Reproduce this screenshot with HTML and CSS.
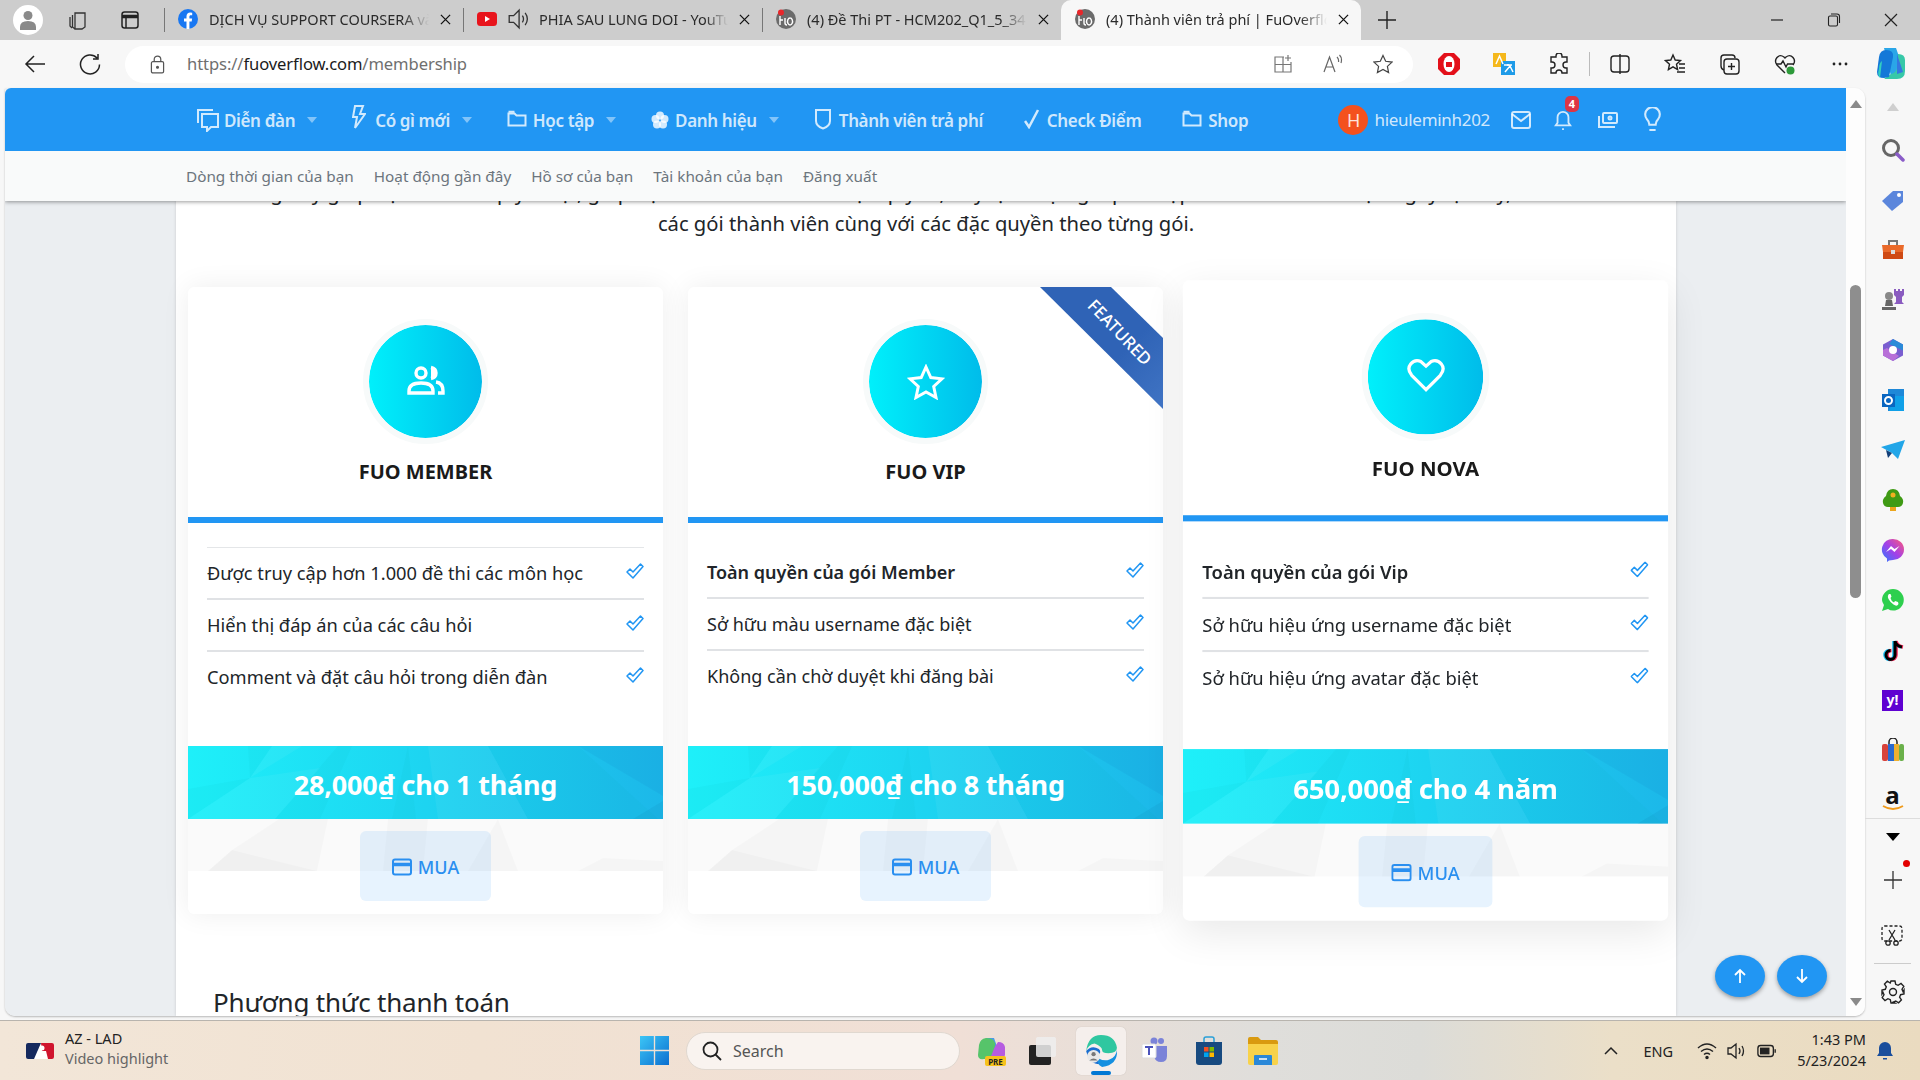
FILE: index.html
```html
<!DOCTYPE html>
<html lang="vi">
<head>
<meta charset="utf-8">
<title>Thành viên trả phí | FuOverflow</title>
<link rel="stylesheet" href="styles.css">
</head>
<body>
<svg class="defs" aria-hidden="true">
  <symbol id="x" viewBox="0 0 12 12"><path d="M1 1l10 10M11 1L1 11" fill="none" stroke="currentColor" stroke-width="1.4"/></symbol>
  <symbol id="tick" viewBox="0 0 18 16"><path d="M1 9l3-3 3 3 7.500-8L17 3.500 7 15z" fill="none" stroke="#2196f3" stroke-width="1.500" stroke-linejoin="round"/></symbol>
  <symbol id="card" viewBox="0 0 20 18"><rect x="1" y="1.500" width="18" height="15" rx="2" fill="none" stroke="#2a8ff0" stroke-width="2"/><path d="M1 6.500h18" stroke="#2a8ff0" stroke-width="3.500"/></symbol>
  <symbol id="fuo" viewBox="0 0 20 20"><circle cx="10" cy="10" r="10" fill="#6b6b6b"/><circle cx="5" cy="3.500" r="3" fill="#e8262a"/><path d="M4 7v9M4 11h3M9 9v5q0 2 2 2M14 9a2.500 3.500 0 1 0 .1 0" fill="none" stroke="#fff" stroke-width="1.400"/></symbol>
  <symbol id="caret" viewBox="0 0 10 6"><path d="M0 0h10L5 6z" fill="currentColor"/></symbol>
  <symbol id="folder" viewBox="0 0 20 18"><path d="M1.500 3.500h6l2 2h9v10h-17z" fill="none" stroke="currentColor" stroke-width="2"/><path d="M1.500 1.800h6" stroke="currentColor" stroke-width="2"/></symbol>
  <symbol id="poly" viewBox="0 0 475 125" preserveAspectRatio="none">
    <path d="M0 43L62 32 0 73zM62 32L60 0h24zM150 0h14l-32 73h-45zM220 0l8 73h-24zM300 0h90l80 73H340z" fill="#0aa" opacity=".06"/>
    <path d="M62 32L84 0h30zM62 32l70-10-45 51H0zM240 0h60l40 73h-90z" fill="#fff" opacity=".05"/>
    <path d="M390 0h85v50z" fill="#007" opacity=".04"/>
    <path d="M475 55l-30 18h30z" fill="#036" opacity=".06"/>
    <path d="M0 73h475v52H0z" fill="#000" opacity=".018"/>
    <path d="M91 73h49l-11 52H20l24-21zM310 73l20 52h-50zM200 73h40l-5 52h-40z" fill="#000" opacity=".02"/>
    <path d="M415 112l60 3v10h-85zM44 104l85 21H20z" fill="#000" opacity=".02"/>
  </symbol>
</svg>

<div class="screen">
  <header class="tabstrip">
    <div class="strip-left">
      <span class="avatar-circle"><svg class="i22" viewBox="0 0 22 22"><circle cx="11" cy="6.500" r="4.500" fill="#8a8a8a"/><path d="M3 21v-3q0-6 8-6t8 6v3z" fill="#8a8a8a"/></svg></span>
      <svg class="i20" viewBox="0 0 20 20" fill="none" stroke="#333" stroke-width="1.300"><path d="M7 3h10v14l-3 2H7zM4.500 5v12l2.500 2M2 7v9l2 2"/></svg>
      <svg class="i20" viewBox="0 0 20 20" fill="none" stroke="#222" stroke-width="1.500"><rect x="2" y="2" width="16" height="16" rx="2.500"/><path d="M2 6.500h16" stroke-width="3.500"/><path d="M6 6v12"/></svg>
    </div>
    <div class="tab">
      <svg class="fav" viewBox="0 0 20 20"><circle cx="10" cy="10" r="10" fill="#1877f2"/><path d="M8.500 20v-7.500H6V9.500h2.500V7.300C8.500 4.800 10 3.500 12.200 3.500l2 .2v2.500h-1.300c-1.200 0-1.500.7-1.500 1.500v1.800h2.700l-.4 3h-2.300V20z" fill="#fff"/></svg>
      <span class="tab-text">DỊCH VỤ SUPPORT COURSERA và các môn</span>
      <svg class="tab-x"><use href="#x"/></svg>
    </div>
    <div class="tab">
      <svg class="fav" viewBox="0 0 20 20"><rect y="3" width="20" height="14" rx="3.500" fill="#e8141c"/><path d="M8 7l5 3-5 3z" fill="#fff"/></svg>
      <svg class="speaker" viewBox="0 0 20 20" fill="none" stroke="#333" stroke-width="1.200"><path d="M2 7h4l5-5v16l-5-5H2zM14 7q2 3 0 6M16.500 4.500q4 5.500 0 11"/></svg>
      <span class="tab-text">PHIA SAU LUNG DOI - YouTube</span>
      <svg class="tab-x"><use href="#x"/></svg>
    </div>
    <div class="tab">
      <svg class="fav"><use href="#fuo"/></svg>
      <span class="tab-text">(4) Đề Thi PT - HCM202_Q1_5_34</span>
      <svg class="tab-x"><use href="#x"/></svg>
    </div>
    <div class="tab tab-active">
      <svg class="fav"><use href="#fuo"/></svg>
      <span class="tab-text">(4) Thành viên trả phí | FuOverflow</span>
      <svg class="tab-x"><use href="#x"/></svg>
    </div>
    <svg class="tab-plus" viewBox="0 0 18 18"><path d="M9 0v18M0 9h18" stroke="#222" stroke-width="1.400"/></svg>
    <div class="win-controls">
      <svg class="i14" viewBox="0 0 14 14"><path d="M1 7h12" stroke="#222" stroke-width="1.200"/></svg>
      <svg class="i14" viewBox="0 0 14 14" fill="none" stroke="#222" stroke-width="1.100"><rect x="1.500" y="3" width="9" height="10" rx="1.500"/><path d="M4 1h6q2.500 0 2.500 2.500V10"/></svg>
      <svg class="i14" viewBox="0 0 14 14"><path d="M1 1l12 12M13 1L1 13" stroke="#222" stroke-width="1.200"/></svg>
    </div>
  </header>

  <div class="toolbar">
    <svg class="tool tool-back" viewBox="0 0 22 22" fill="none" stroke="#222" stroke-width="1.500"><path d="M21 11H2M10 3l-8 8 8 8"/></svg>
    <svg class="tool tool-reload" viewBox="0 0 22 22" fill="none" stroke="#222" stroke-width="1.500"><path d="M18 5a9.500 9.500 0 1 0 2.500 6.500M19 1v5h-5"/></svg>
    <div class="address">
      <svg class="lock" viewBox="0 0 16 20" fill="none" stroke="#555" stroke-width="1.300"><rect x="1.500" y="7" width="13" height="12" rx="1.500"/><path d="M4.500 7V4.500a3.500 3.500 0 0 1 7 0V7"/><circle cx="8" cy="13" r="1" fill="#555"/></svg>
      <span class="url"><span class="url-dim">https://</span>fuoverflow.com<span class="url-dim">/membership</span></span>
      <div class="addr-icons">
        <svg class="i20" viewBox="0 0 20 20" fill="none" stroke="#777" stroke-width="1.200"><path d="M11 3H2v15h16V8M2 10.500h16M10 3v15M15 1v6M12 4h6"/></svg>
        <svg class="i20" viewBox="0 0 20 20" fill="none" stroke="#666" stroke-width="1.200"><path d="M1 18L6.500 3 12 18M3 13h7M14 3q2 2 1.500 5M16.500 1q3 3 1.500 8"/></svg>
        <svg class="i20" viewBox="0 0 20 20" fill="none" stroke="#444" stroke-width="1.200"><path d="M10 1.500l2.700 5.800 6.300.8-4.600 4.300 1.200 6.200L10 15.500l-5.600 3.100 1.200-6.200L1 8.100l6.300-.8z"/></svg>
      </div>
    </div>
    <div class="tool-icons">
      <svg class="i24" viewBox="0 0 24 24"><path d="M7 1h10l6 6v10l-6 6H7l-6-6V7z" fill="#e3101a"/><ellipse cx="12" cy="12" rx="5.500" ry="8" fill="#fff"/><path d="M9 10h6v5H9z" fill="#e3101a"/></svg>
      <svg class="i24" viewBox="0 0 24 24"><rect x="1" y="1" width="13" height="14" fill="#f5b81c"/><rect x="9" y="9" width="14" height="14" fill="#1e9be8"/><path d="M12 13h8M16 12v2M13 20l5-6 3 6" fill="none" stroke="#fff" stroke-width="1.500"/><path d="M4 12L7.500 4 11 12" fill="none" stroke="#fff" stroke-width="1.500"/></svg>
      <svg class="i22" viewBox="0 0 22 22" fill="none" stroke="#222" stroke-width="1.400"><path d="M8 3a3 3 0 0 1 6 0v1h5v5h-1a3 3 0 0 0 0 6h1v5h-5a3 3 0 0 0-6 0H3v-5h1a3 3 0 0 0 0-6H3V4h5z"/></svg>
      <span class="tool-sep"></span>
      <svg class="i22" viewBox="0 0 22 22" fill="none" stroke="#222" stroke-width="1.400"><rect x="2" y="3" width="18" height="16" rx="3"/><path d="M11 1v20"/></svg>
      <svg class="i22" viewBox="0 0 22 22" fill="none" stroke="#222" stroke-width="1.400"><path d="M9 2l2.200 5 5.300.6-4 3.600 1.100 5.300L9 13.800l-4.600 2.700 1.100-5.300-4-3.600L6.800 7zM15 11h6M15 15h6M13 19h8"/></svg>
      <svg class="i22" viewBox="0 0 22 22" fill="none" stroke="#222" stroke-width="1.400"><rect x="5" y="6" width="15" height="15" rx="3"/><path d="M5 17q-3-1-3-4V5q0-3 3-3h8q3 0 3 3M12.500 10v7M9 13.500h7"/></svg>
      <svg class="i22" viewBox="0 0 22 22" fill="none" stroke="#222" stroke-width="1.400"><path d="M11 20L3 12q-3-4 0-7.500T10 4l1 1 1-1q4-3 7 .5t0 7.500"/><path d="M2 11h5l2-3 3 6 1.500-3H20"/><circle cx="16.500" cy="17.500" r="4" fill="#2d9a3a" stroke="none"/></svg>
      <svg class="i22" viewBox="0 0 22 22"><circle cx="5" cy="11" r="1.400" fill="#222"/><circle cx="11" cy="11" r="1.400" fill="#222"/><circle cx="17" cy="11" r="1.400" fill="#222"/></svg>
      <svg class="copilot" viewBox="0 0 30 34"><path d="M8 1h12l7 20q1 6-5 6L15 29z" fill="#2aa6e8"/><path d="M22 7q7 0 7 6v11q0 8-8 8H8l7-5q5-1 6-6z" fill="#37c8a8"/><path d="M21 7l6 18-6 2z" fill="#3478e0"/><path d="M10 3Q4 3 3 10L1 25q0 6 7 6l5-1 4-20q1-7-7-7z" fill="#1478d8"/><path d="M3 22q0-6 3-8l-2 17q-3-3-1-9z" fill="#33d0c0"/></svg>
    </div>
  </div>

  <div class="main">
    <div class="viewport">
      <div class="page">
        <nav class="nav">
          <a class="nav-item"><svg class="ni ni-24" viewBox="0 0 24 24" fill="none" stroke="currentColor" stroke-width="2"><path d="M2 15V2h15"/><path d="M6 6h16v13h-7l-4 4v-4H6z"/></svg>Diễn đàn<svg class="caret"><use href="#caret"/></svg></a>
          <a class="nav-item"><svg class="ni ni-14" viewBox="0 0 14 24" fill="none" stroke="currentColor" stroke-width="2"><path d="M3 1h8L8 9h5L3 23l2-11H1z"/></svg>Có gì mới<svg class="caret"><use href="#caret"/></svg></a>
          <a class="nav-item"><svg class="ni ni-20"><use href="#folder"/></svg>Học tập<svg class="caret"><use href="#caret"/></svg></a>
          <a class="nav-item"><svg class="ni ni-18" viewBox="0 0 18 18" fill="currentColor"><circle cx="9" cy="4.500" r="4"/><circle cx="4.500" cy="8" r="4"/><circle cx="13.500" cy="8" r="4"/><circle cx="6" cy="13.500" r="4"/><circle cx="12" cy="13.500" r="4"/></svg>Danh hiệu<svg class="caret"><use href="#caret"/></svg></a>
          <a class="nav-item nav-plain"><svg class="ni ni-18t" viewBox="0 0 18 22" fill="none" stroke="currentColor" stroke-width="2"><path d="M2 2h14v11q0 5-7 7.500Q2 18 2 13z"/></svg>Thành viên trả phí</a>
          <a class="nav-item nav-plain"><svg class="ni ni-16" viewBox="0 0 16 20" fill="none" stroke="currentColor" stroke-width="2.500"><path d="M1 12l4 6L14 1"/></svg>Check Điểm</a>
          <a class="nav-item"><svg class="ni ni-20"><use href="#folder"/></svg>Shop</a>
          <div class="nav-right">
            <a class="user"><span class="user-av">H</span>hieuleminh202</a>
            <svg class="nr nr-first" viewBox="0 0 20 18" fill="none" stroke="currentColor" stroke-width="2"><rect x="1" y="1" width="18" height="16" rx="2"/><path d="M1 3l9 7 9-7"/></svg>
            <span class="bell"><svg class="nr" viewBox="0 0 20 22" fill="none" stroke="currentColor" stroke-width="2"><path d="M2 17h16l-2-3V8a6 6 0 0 0-12 0v6zM9 21h2"/></svg><span class="badge">4</span></span>
            <svg class="nr" viewBox="0 0 20 18" fill="none" stroke="currentColor" stroke-width="2"><path d="M1 5v11h16"/><rect x="5" y="2" width="14" height="10" rx="1"/><circle cx="12" cy="7" r="1.500"/></svg>
            <svg class="nr nr-bulb" viewBox="0 0 18 24" fill="none" stroke="currentColor" stroke-width="2"><path d="M6 17q0-3-2.500-5.500a7 7 0 1 1 11 0Q12 14 12 17zM6 22h6"/></svg>
          </div>
        </nav>
        <div class="subnav">
          <a>Dòng thời gian của bạn</a><a>Hoạt động gần đây</a><a>Hồ sơ của bạn</a><a>Tài khoản của bạn</a><a>Đăng xuất</a>
        </div>
        <main class="body">
          <section class="panel">
            <p class="intro">Trang này giúp bạn nắm rõ quyền lợi, giúp bạn hiểu thêm về các đặc quyền, hãy lựa chọn gói phù hợp với nhu cầu của bạn ngay tại đây, bên dưới là<br>các gói thành viên cùng với các đặc quyền theo từng gói.</p>
            <div class="plans">
              <article class="plan">
                <div class="plan-head">
                  <span class="plan-icon"><svg class="pi" viewBox="0 2 38 30" fill="none" stroke="#fff" stroke-width="3.400"><circle cx="14" cy="8" r="5"/><path d="M24 2.500q5 1 5 5.500t-5 5.500" fill="#fff"/><path d="M2 28v-2q0-8 12-8t12 8v2zM29 17q7 1 7 9v2h-5"/></svg></span>
                  <h3>FUO MEMBER</h3>
                </div>
                <ul class="feats feats-top">
                  <li>Được truy cập hơn 1.000 đề thi các môn học<svg class="tick"><use href="#tick"/></svg></li>
                  <li>Hiển thị đáp án của các câu hỏi<svg class="tick"><use href="#tick"/></svg></li>
                  <li>Comment và đặt câu hỏi trong diễn đàn<svg class="tick"><use href="#tick"/></svg></li>
                </ul>
                <div class="plan-foot">
                  <svg class="poly"><use href="#poly"/></svg>
                  <div class="price">28,000₫ cho 1 tháng</div>
                  <a class="buy"><svg class="buy-i"><use href="#card"/></svg>MUA</a>
                </div>
              </article>
              <article class="plan">
                <div class="ribbon"><span>FEATURED</span></div>
                <div class="plan-head">
                  <span class="plan-icon"><svg class="pi" viewBox="0 0 38 36" fill="none" stroke="#fff" stroke-width="3"><path d="M19 3l4.800 10.500 11.200 1.300-8.300 7.700 2.300 11L19 28l-10 5.500 2.300-11L3 14.800l11.200-1.300z"/></svg></span>
                  <h3>FUO VIP</h3>
                </div>
                <ul class="feats">
                  <li><b>Toàn quyền của gói Member</b><svg class="tick"><use href="#tick"/></svg></li>
                  <li>Sở hữu màu username đặc biệt<svg class="tick"><use href="#tick"/></svg></li>
                  <li>Không cần chờ duyệt khi đăng bài<svg class="tick"><use href="#tick"/></svg></li>
                </ul>
                <div class="plan-foot">
                  <svg class="poly"><use href="#poly"/></svg>
                  <div class="price">150,000₫ cho 8 tháng</div>
                  <a class="buy"><svg class="buy-i"><use href="#card"/></svg>MUA</a>
                </div>
              </article>
              <article class="plan plan-hot">
                <div class="plan-head">
                  <span class="plan-icon"><svg class="pi" viewBox="0 2 38 34" fill="none" stroke="#fff" stroke-width="3.200"><path d="M19 31L5 17Q0 11 4 6t10-2.500L19 8l5-4.500Q30 1 34 6t-1 11z"/></svg></span>
                  <h3>FUO NOVA</h3>
                </div>
                <ul class="feats">
                  <li><b>Toàn quyền của gói Vip</b><svg class="tick"><use href="#tick"/></svg></li>
                  <li>Sở hữu hiệu ứng username đặc biệt<svg class="tick"><use href="#tick"/></svg></li>
                  <li>Sở hữu hiệu ứng avatar đặc biệt<svg class="tick"><use href="#tick"/></svg></li>
                </ul>
                <div class="plan-foot">
                  <svg class="poly"><use href="#poly"/></svg>
                  <div class="price">650,000₫ cho 4 năm</div>
                  <a class="buy"><svg class="buy-i"><use href="#card"/></svg>MUA</a>
                </div>
              </article>
            </div>
            <h2 class="pay-title">Phương thức thanh toán</h2>
          </section>
        </main>
        <div class="fabs">
          <a class="fab"><svg class="i16" viewBox="0 0 16 16" fill="none" stroke="#fff" stroke-width="1.800"><path d="M8 15V2M3 7l5-5 5 5"/></svg></a>
          <a class="fab"><svg class="i16" viewBox="0 0 16 16" fill="none" stroke="#fff" stroke-width="1.800"><path d="M8 1v13M3 9l5 5 5-5"/></svg></a>
        </div>
      </div>
      <div class="scrollbar">
        <span class="sb-up"></span>
        <span class="sb-thumb"></span>
        <span class="sb-down"></span>
      </div>
    </div>
    <aside class="sidebar">
      <div class="sd sd-arrow"><span class="sb-up sb-up-pale"></span></div>
      <div class="sd"><svg class="i24" viewBox="0 0 24 24" fill="none"><circle cx="10" cy="10" r="7.500" stroke="#666" stroke-width="3"/><path d="M16 16l6 6" stroke="#8a5cc8" stroke-width="3.500" stroke-linecap="round"/></svg></div>
      <div class="sd"><svg class="i24" viewBox="0 0 24 24"><path d="M12 3h10v11L11 23 1 13z" fill="#5b86dc"/><circle cx="18" cy="7" r="2" fill="#fff"/></svg></div>
      <div class="sd"><svg class="i24" viewBox="0 0 24 24"><path d="M8 7V3h8v4" fill="none" stroke="#777" stroke-width="2"/><path d="M1 7h22l-1 7H2z" fill="#ea6a2a"/><path d="M2 14h20v7H2z" fill="#cf4a14"/><rect x="10" y="12" width="4" height="4" fill="#ddd"/></svg></div>
      <div class="sd"><svg class="i24" viewBox="0 0 24 24"><circle cx="8" cy="8" r="4" fill="#888"/><path d="M5 12h6l1 6H4zM1 19h14v3H1z" fill="#666"/><path d="M13 1h2v2h2V1h2v2h2V1h2v6l-2 2v5l2 2H13l2-2V9l-2-2z" fill="#8a5cc0"/></svg></div>
      <div class="sd"><svg class="i24" viewBox="0 0 24 24"><path d="M12 1l10 5.500v11L12 23 2 17.500v-11z" fill="#7a5ed0"/><path d="M12 1l10 5.500v6L8 6z" fill="#2a8ad8"/><path d="M2 12l4-2 12 8-6 5-10-5.500z" fill="#b870d8"/><circle cx="12" cy="12" r="4" fill="#fff"/></svg></div>
      <div class="sd"><svg class="i24" viewBox="0 0 24 24"><path d="M7 1h16v22H7z" fill="#1e88d8"/><path d="M14 8h9v15H8z" fill="#10a0e8"/><rect x="1" y="6" width="13" height="13" fill="#0a66c0"/><circle cx="7.500" cy="12.500" r="3.500" fill="none" stroke="#fff" stroke-width="2"/></svg></div>
      <div class="sd"><svg class="i24" viewBox="0 0 24 24"><path d="M0 9L24 2 17 21l-6-6z" fill="#22a6e8"/><path d="M5 12l6 3-4 5z" fill="#123f78"/></svg></div>
      <div class="sd"><svg class="i24" viewBox="0 0 24 24"><rect x="9" y="18" width="6" height="5" fill="#eca51c"/><path d="M12 1q6 0 7 7 4 3 3 7t-5 4H7q-4 0-5-4t3-7q1-7 7-7z" fill="#3f9a14"/><circle cx="12" cy="7" r="2.500" fill="#f0b020"/></svg></div>
      <div class="sd"><svg class="i24" viewBox="0 0 24 24"><defs><linearGradient id="ms" x1="0" y1="1" x2="1" y2="0"><stop offset="0" stop-color="#2a7cff"/><stop offset=".5" stop-color="#a440e8"/><stop offset="1" stop-color="#ff5a78"/></linearGradient></defs><path d="M12 1a11 10.500 0 0 1 0 21l-4 .5-2 1.500v-3.500A10.500 10.500 0 0 1 12 1z" fill="url(#ms)"/><path d="M5 14l5-6 3.500 3 5-3-5 6L10 11z" fill="#fff"/></svg></div>
      <div class="sd"><svg class="i24" viewBox="0 0 24 24"><path d="M12 1a10.800 10.800 0 0 1 0 21.600q-3 0-5-1.500L1 23l2-6Q1 14 1 12A11 11 0 0 1 12 1z" fill="#2ecf4e"/><path d="M8 6q-2 2-.5 5t5 5.500 5-.5l-.5-2-3-1-1 1.500Q10 13 9.500 10l1-1.500L9.500 6z" fill="#fff"/></svg></div>
      <div class="sd"><svg class="i24" viewBox="0 0 24 24" fill="none"><path d="M14 2v14a4.500 4.500 0 1 1-4.500-4.500M14 2q1 5 7 6" stroke="#1be" stroke-width="3.500" transform="translate(-1 1)"/><path d="M14 2v14a4.500 4.500 0 1 1-4.500-4.500M14 2q1 5 7 6" stroke="#f2295b" stroke-width="3.500" transform="translate(1 1)"/><path d="M14 2v14a4.500 4.500 0 1 1-4.500-4.500M14 2q1 5 7 6" stroke="#000" stroke-width="3" transform="translate(0 1)"/></svg></div>
      <div class="sd"><span class="yahoo">y!</span></div>
      <div class="sd"><svg class="i24" viewBox="0 0 24 24"><path d="M8 7V4a4 4 0 0 1 8 0v3" fill="none" stroke="#222" stroke-width="1.500"/><rect x="1" y="6" width="6" height="17" rx="2" fill="#d8423a"/><rect x="7" y="6" width="6" height="17" fill="#2a6ad0"/><rect x="13" y="6" width="5" height="17" fill="#eeb030"/><rect x="18" y="6" width="5" height="17" rx="2" fill="#6ab04a"/></svg></div>
      <div class="sd sd-last"><span class="amz">a</span><svg class="amz-smile" viewBox="0 0 22 6"><path d="M1 1q10 6 20 0" fill="none" stroke="#f09a1a" stroke-width="1.800"/></svg></div>
      <div class="sd sd-caret"><svg class="sc" viewBox="0 0 14 10"><path d="M0 1h14L7 9z" fill="#000"/></svg></div>
      <div class="sd sd-plus"><svg class="i18" viewBox="0 0 18 18"><path d="M9 0v18M0 9h18" stroke="#333" stroke-width="1.300"/></svg><span class="red-dot"></span></div>
      <div class="sd sd-snip"><svg class="i24" viewBox="0 0 24 24" fill="none" stroke="#222" stroke-width="1.300"><rect x="1" y="2" width="20" height="15" rx="2.500" stroke-dasharray="3 2"/><path d="M8 6l6 10M14 6L8 16"/><circle cx="7" cy="19" r="2.200"/><circle cx="15" cy="19" r="2.200"/></svg></div>
      <div class="sd"><svg class="i24" viewBox="0 0 24 24" fill="none" stroke="#222" stroke-width="1.400"><circle cx="12" cy="12" r="3.500"/><path d="M10 1h4l.7 3.300 2.400 1 2.900-1.800 2.800 2.800-1.800 2.900 1 2.400L23 10v4l-3.400.7-1 2.400 1.800 2.900-2.800 2.800-2.900-1.800-2.400 1L14 23h-4l-.7-3.300-2.400-1-2.900 1.800-2.800-2.800 1.800-2.900-1-2.400L1 14V10l3.300-.7 1-2.400L3.500 4l2.800-2.800 2.900 1.800z"/></svg></div>
    </aside>
  </div>

  <footer class="taskbar">
    <div class="tb-news">
      <svg class="mlb" viewBox="0 0 28 16"><rect width="28" height="16" rx="2" fill="#fff"/><path d="M2 0h13L8 16H2q-2 0-2-2V2q0-2 2-2z" fill="#15295e"/><path d="M15 0h11q2 0 2 2v12q0 2-2 2H20l-4-8z" fill="#d0152e"/><circle cx="16" cy="5" r="2.500" fill="#fff"/><path d="M12 8h8l2 8H10z" fill="#fff"/></svg>
      <div class="news-text"><span>AZ - LAD</span><span class="news-sub">Video highlight</span></div>
    </div>
    <svg class="win" viewBox="0 0 30 30"><defs><linearGradient id="wg" x1="0" y1="0" x2="1" y2="1"><stop offset="0" stop-color="#3cc6f6"/><stop offset="1" stop-color="#0b6fd0"/></linearGradient></defs><path d="M0 0h14.300v14.300H0zM15.700 0H30v14.300H15.700zM0 15.700h14.300V30H0zM15.700 15.700H30V30H15.700z" fill="url(#wg)"/></svg>
    <div class="tb-search"><svg class="i20" viewBox="0 0 20 20" fill="none" stroke="#222" stroke-width="1.800"><circle cx="8.500" cy="8.500" r="7"/><path d="M13.500 13.500L19 19"/></svg><span>Search</span></div>
    <div class="tb-apps">
      <span class="app app-first"><svg class="i30" viewBox="0 0 30 30"><path d="M9 2h8l5 14q3 5-2 6H8z" fill="#4a9be8"/><path d="M21 6q6 0 7 5v8q-1 5-8 4H10z" fill="#b65ce0"/><path d="M9 2Q3 3 2 9L1 19q0 5 6 4h6l5-13q1-8-9-8z" fill="#56c46a"/><rect x="8" y="20" width="21" height="10" rx="2" fill="#f7c21c"/><text class="pre" x="18.500" y="28.500" text-anchor="middle">PRE</text></svg></span>
      <span class="app"><svg class="i30" viewBox="0 0 30 30"><rect x="2" y="9" width="22" height="20" rx="2" fill="#222"/><rect x="9" y="1" width="20" height="20" rx="2" fill="#eee" opacity=".85"/></svg></span>
      <span class="app app-on"><svg class="i32" viewBox="0 0 32 32"><path d="M16 1q13 0 15 12 0 5-8 5-6 0-6-3T10 9Q4 10 2 16 4 1 16 1z" fill="#2fc7a0"/><path d="M2 16q5-6 12-2 3 3-1 6-2 6 6 8-13 3-17-12z" fill="#1a6ed0"/><path d="M31 15q1 14-14 16-6-3-3-8 5 3 10 1 6-2 7-9z" fill="#1590e0"/><circle cx="9" cy="21" r="6" fill="#e8e8e8"/><circle cx="9" cy="19" r="2" fill="#777"/><path d="M5 25q4-4 8 0z" fill="#777"/></svg><span class="app-bar"></span></span>
      <span class="app"><svg class="i30" viewBox="0 0 30 30"><circle cx="21" cy="5" r="3" fill="#7b83d8"/><circle cx="14" cy="5" r="3.500" fill="#7b83d8"/><path d="M14 10h13v10q0 6-6 6t-7-6z" fill="#7b83d8"/><rect x="2" y="8" width="14" height="14" rx="1.500" fill="#fff" stroke="#ddd"/><path d="M5 11h8M9 11v8" stroke="#4b53bc" stroke-width="2"/></svg></span>
      <span class="app"><svg class="i30" viewBox="0 0 30 30"><path d="M10 6V3a2 2 0 0 1 2-2h6a2 2 0 0 1 2 2v3" fill="none" stroke="#2aa0d8" stroke-width="1.500"/><path d="M2 6h26v20q0 3-3 3H5q-3 0-3-3z" fill="#174a80"/><path d="M10 11h4.500v4.500H10z" fill="#f25022"/><path d="M15.500 11H20v4.500h-4.500z" fill="#7fba00"/><path d="M10 16.500h4.500V21H10z" fill="#00a4ef"/><path d="M15.500 16.500H20V21h-4.500z" fill="#ffb900"/></svg></span>
      <span class="app"><svg class="i30" viewBox="0 0 30 30"><path d="M0 3q0-2 2-2h8l3 3h15q2 0 2 2v4H0z" fill="#d99a10"/><path d="M0 8h30v19q0 2-2 2H2q-2 0-2-2z" fill="#f8d24a"/><path d="M7 19h16q1 0 1 1v9H6v-9q0-1 1-1z" fill="#2a88d8"/><path d="M11 23h8" stroke="#fff" stroke-width="1.500"/></svg></span>
    </div>
    <div class="tray">
      <svg class="i14" viewBox="0 0 14 14" fill="none" stroke="#222" stroke-width="1.500"><path d="M1 10l6-6 6 6"/></svg>
      <span class="eng">ENG</span>
      <svg class="i20" viewBox="0 0 20 20" fill="none" stroke="#222" stroke-width="1.500"><path d="M1 7q9-8 18 0M4 10.500q6-5 12 0M7 13.500q3-2.500 6 0"/><circle cx="10" cy="16.500" r="1" fill="#222"/></svg>
      <svg class="i20" viewBox="0 0 20 20" fill="none" stroke="#222" stroke-width="1.300"><path d="M1 7h3l5-4v14l-5-4H1zM12 7q2 3 0 6M15 5q3 5 0 10"/></svg>
      <svg class="i20" viewBox="0 0 22 20" fill="none" stroke="#222" stroke-width="1.500"><rect x="1" y="4" width="17" height="12" rx="3"/><rect x="4" y="7" width="9" height="6" fill="#222"/><path d="M20 8v4"/></svg>
      <div class="clock"><span>1:43 PM</span><span>5/23/2024</span></div>
      <svg class="i20 tb-bell" viewBox="0 0 20 20"><path d="M2 15l2-3V7a6 6 0 0 1 12 0v5l2 3zM8 17h4v1.500H8z" fill="#1a4e9c"/></svg>
    </div>
  </footer>
</div>
</body>
</html>
```

FILE: styles.css
```css
* { box-sizing: border-box; }
html, body { margin: 0; height: 100%; overflow: hidden; }
body { font-family: "Noto Sans", "Open Sans", "Liberation Sans", sans-serif; color: #212529; }
a { color: inherit; text-decoration: none; }
h2, h3, p, ul { margin: 0; padding: 0; }
svg { display: block; flex: none; }
.defs { position: absolute; width: 0; height: 0; }
.i14 { width: 14px; height: 14px; }
.i16 { width: 16px; height: 16px; }
.i18 { width: 18px; height: 18px; }
.i20 { width: 20px; height: 20px; }
.i22 { width: 22px; height: 22px; }
.i24 { width: 24px; height: 24px; }
.i30 { width: 30px; height: 30px; }
.i32 { width: 34px; height: 34px; }

.screen { width: 1920px; height: 1080px; display: flex; flex-direction: column; background: #f7f7f7; }

/* tab strip */
.tabstrip { height: 40px; background: #cdcdcd; display: flex; align-items: center; flex: none; }
.strip-left { width: 164px; height: 100%; display: flex; align-items: center; padding-left: 13px; gap: 25px; }
.strip-left .i20:last-child { margin-left: 7px; }
.avatar-circle { width: 30px; height: 30px; border-radius: 50%; background: #fff; display: flex; align-items: center; justify-content: center; }
.tab { width: 299px; height: 40px; display: flex; align-items: center; padding: 0 12px 2px 14px; font-size: 14.500px; color: #2a2a2a; position: relative; gap: 11px; }
.tab::before { content: ""; position: absolute; left: 0; top: 8px; bottom: 8px; width: 1px; background: #777; }
.tab-active { background: #f7f7f7; border-radius: 10px 10px 0 0; width: 300px; }
.tab-active::before { display: none; }
.fav { width: 20px; height: 20px; }
.speaker { width: 22px; height: 22px; margin: 0 -1px; }
.tab-text { flex: 1; white-space: nowrap; overflow: hidden; -webkit-mask-image: linear-gradient(90deg, #000 88%, transparent); mask-image: linear-gradient(90deg, #000 88%, transparent); }
.tab-x { width: 11px; height: 11px; color: #111; }
.tab-plus { width: 18px; height: 18px; margin-left: 17px; }
.win-controls { margin-left: auto; display: flex; gap: 43px; padding-right: 22px; }

/* toolbar */
.toolbar { height: 48px; flex: none; display: flex; align-items: center; padding-left: 24px; background: #f7f7f7; }
.tool { width: 22px; height: 22px; }
.tool-reload { margin-left: 33px; }
.address { margin-left: 24px; flex: none; width: 1288px; height: 37px; border-radius: 19px; background: #fff; display: flex; align-items: center; padding: 0 20px 0 25px; }
.lock { width: 15px; height: 19px; }
.url { margin-left: 22px; font-size: 16.600px; color: #1b1b1b; letter-spacing: -.1px; padding-bottom: 2px; }
.url-dim { color: #6f6f6f; }
.addr-icons { margin-left: auto; display: flex; gap: 30px; }
.tool-icons { margin-left: 24px; display: flex; align-items: center; flex: 1; min-width: 0; gap: 31px; }
.tool-icons .i22 { margin: 0 1px; }
.tool-sep { width: 1px; height: 24px; background: #bbb; margin: 0 -13px; }
.copilot { width: 30px; height: 34px; margin-left: -7px; }

/* main */
.main { flex: 1; display: flex; min-height: 0; padding-bottom: 4px; padding-left: 5px; }
.viewport { width: 1860px; flex: none; display: flex; border-radius: 0 10px 10px 10px; overflow: hidden; box-shadow: 0 1px 2px rgba(0,0,0,.25); }
.page { flex: 1; position: relative; display: flex; flex-direction: column; min-width: 0; overflow: hidden; background: #ebeef1; }

.nav { height: 63px; flex: none; background: #2196f3; display: flex; align-items: center; padding: 1px 184px 0 191px; gap: 35px; color: rgba(255,255,255,.8); font-weight: 600; font-size: 17px; letter-spacing: -.36px; border-radius: 6px 0 0 0; position: relative; z-index: 3; }
.nav-item { display: flex; align-items: center; gap: 6px; white-space: nowrap; }
.nav-plain { margin-right: 6px; }
.ni-24 { width: 24px; height: 24px; margin-right: -2px; }
.ni-14 { width: 14px; height: 24px; margin-right: 3px; margin-top: -6px; }
.ni-20 { width: 20px; height: 18px; margin-top: -3px; }
.ni-18 { width: 18px; height: 18px; }
.ni-18t { width: 18px; height: 22px; margin-right: 1px; margin-top: -3px; }
.ni-16 { width: 16px; height: 20px; margin-top: -2px; margin-right: 1px; }
.caret { width: 10px; height: 6px; margin-left: 6px; opacity: .55; }
.nav-right { margin-left: auto; display: flex; align-items: center; font-weight: 400; gap: 25px; letter-spacing: -.3px; margin-top: -1px; }
.user { display: flex; align-items: center; gap: 6px; margin-right: -4px; }
.user-av { width: 30px; height: 30px; border-radius: 50%; background: #f4511e; color: rgba(255,255,255,.85); display: flex; align-items: center; justify-content: center; font-size: 18px; }
.nr { width: 20px; height: 20px; }
.nr-bulb { width: 19px; height: 25px; }
.bell { position: relative; margin-left: -3px; }
.badge { position: absolute; left: 12px; top: -14px; width: 14px; height: 16px; border-radius: 5px; background: #dc3545; color: #fff; font-size: 11px; font-weight: 700; line-height: 16px; text-align: center; letter-spacing: 0; }

.subnav { height: 50px; flex: none; display: flex; align-items: center; gap: 20px; padding-left: 181px; background: #f9fafa; color: #6c757d; font-size: 15.300px; position: relative; z-index: 2; box-shadow: 0 1px 4px rgba(0,0,0,.4); }

.body { flex: 1; min-height: 0; padding-left: 171px; }
.panel { display: flow-root; width: 1500px; height: 100%; background: #fff; padding: 0 12px; box-shadow: 0 0 3px rgba(0,0,0,.15); }
.intro { margin: -24px 0 48px; font-size: 20.200px; line-height: 31px; text-align: center; white-space: nowrap; }

.plans { display: grid; grid-template-columns: repeat(3, 475px); gap: 25px; }
.plan { height: 627px; background: #fff; border-radius: 6px; box-shadow: 0 0 28px rgba(0,0,0,.07); display: flex; flex-direction: column; position: relative; overflow: hidden; }
.plan-hot { transform: scale(1.0212); box-shadow: 0 12px 40px rgba(0,0,0,.09); z-index: 1; }
.plan-head { height: 236px; flex: none; border-bottom: 6px solid #2196f3; display: flex; flex-direction: column; align-items: center; padding-top: 32px; }
.plan-icon { width: 125px; height: 125px; border-radius: 50%; border: 6px solid #f7fafa; background: linear-gradient(90deg, #00f0fb, #00bcea); background-clip: padding-box; display: flex; align-items: center; justify-content: center; }
.pi { width: 38px; height: 36px; }
.plan-head h3 { margin-top: 14px; font-size: 20px; line-height: 27px; font-weight: 700; color: #1a1a1a; }

.feats { list-style: none; margin: 24px 19px 0; }
.feats-top { border-top: 1px solid #e4e6e8; }
.feats li { height: 52px; display: flex; align-items: center; justify-content: space-between; font-size: 18px; color: #212529; border-bottom: 2px solid #e0e2e5; padding-bottom: 1px; }
.feats-top li { font-size: 18.250px; }
.feats li:last-child { border-bottom-color: transparent; }
.feats b { font-weight: 600; }
.tick { width: 18px; height: 16px; margin-top: -3px; }

.plan-foot { margin-top: auto; position: relative; height: 168px; flex: none; display: flex; flex-direction: column; align-items: center; }
.plan-foot::before { content: ""; position: absolute; left: 0; right: 0; top: 0; height: 73px; background: linear-gradient(90deg, #1ef0f9, #1cb8e9); }
.poly { position: absolute; left: 0; top: 0; width: 100%; height: 125px; z-index: 1; pointer-events: none; }
.price { position: relative; z-index: 2; align-self: stretch; height: 73px; flex: none; color: #fff; font-size: 27px; font-weight: 700; letter-spacing: -.2px; display: flex; align-items: center; justify-content: center; padding-top: 3px; }
.buy { margin-top: 12px; width: 131px; height: 70px; position: relative; z-index: 2; border-radius: 6px; background: rgba(33,150,243,.11); color: #2a8ff0; font-size: 18px; font-weight: 500; display: flex; align-items: center; justify-content: center; gap: 6px; padding-top: 1px; }
.buy-i { width: 20px; height: 18px; }

.ribbon { position: absolute; z-index: 3; right: 0; top: 0; width: 123px; height: 122px; background: linear-gradient(135deg, #2f63b6 60%, #4074c4); clip-path: polygon(0 0, 71px 0, 123px 51px, 123px 122px); color: #fff; }
.ribbon span { position: absolute; left: 80px; top: 45px; transform: translate(-50%, -50%) rotate(46deg); font-size: 17px; font-weight: 500; white-space: nowrap; }

.pay-title { margin: 69px 0 0 25px; font-size: 26px; letter-spacing: -.2px; font-weight: 400; line-height: 38px; }

.fabs { position: absolute; right: 19px; bottom: 19px; display: flex; gap: 12px; z-index: 4; }
.fab { width: 50px; height: 42px; border-radius: 50%; background: #2196f3; box-shadow: 0 2px 4px rgba(0,0,0,.35); display: flex; align-items: center; justify-content: center; }

.scrollbar { width: 19px; flex: none; background: #fdfdfd; position: relative; display: flex; flex-direction: column; align-items: center; padding-top: 12px; }
.sb-up { width: 0; height: 0; border-left: 6px solid transparent; border-right: 6px solid transparent; border-bottom: 8px solid #8a8a8a; display: block; }
.sb-up-pale { border-bottom-color: #cfcfcf; }
.sb-thumb { width: 11px; height: 313px; margin-top: 177px; background: #8e8e8e; border-radius: 6px; }
.sb-down { margin-top: auto; margin-bottom: 10px; width: 0; height: 0; border-left: 6px solid transparent; border-right: 6px solid transparent; border-top: 8px solid #8a8a8a; }

/* sidebar */
.sidebar { flex: 1; display: flex; flex-direction: column; align-items: stretch; }
.sd { height: 50px; flex: none; display: flex; align-items: center; justify-content: center; position: relative; }
.sd-arrow { height: 37px; }
.sd-last { height: 44px; flex-direction: column; justify-content: flex-start; padding-top: 8px; border-bottom: 1px solid #ddd; }
.amz { font-size: 24px; font-weight: 700; line-height: 24px; color: #111; }
.amz-smile { width: 22px; height: 6px; margin-top: -2px; }
.sd-caret { height: 36px; }
.sc { width: 14px; height: 10px; }
.sd-snip { height: 62px; }
.sd-snip::after { content: ""; position: absolute; left: 9px; right: 9px; bottom: 3px; height: 1px; background: #ccc; }
.red-dot { position: absolute; width: 7px; height: 7px; border-radius: 50%; background: #e30000; left: 38px; top: 5px; }
.yahoo { width: 21px; height: 21px; background: #5f01d1; color: #fff; font-weight: 700; font-size: 14px; line-height: 20px; text-align: center; }

/* taskbar */
.taskbar { height: 60px; flex: none; border-top: 1px solid #b8b4ae; background: linear-gradient(90deg, #f2e6d8 0%, #f1e2d2 25%, #f0dfd6 50%, #dfdedb 66%, #dcdcd8 74%, #ebdfc8 84%, #eadbc0 100%); display: flex; align-items: center; }
.tb-news { width: 640px; flex: none; display: flex; align-items: center; padding-left: 26px; gap: 11px; }
.mlb { width: 28px; height: 16px; }
.news-text { display: flex; flex-direction: column; font-size: 14.500px; line-height: 20px; color: #222; margin-top: -5px; }
.news-sub { color: #666; }
.win { width: 29px; height: 29px; }
.tb-search { margin-left: 17px; width: 274px; height: 38px; border-radius: 19px; background: #f9f3ef; border: 1px solid #e0d8d0; display: flex; align-items: center; padding-left: 15px; gap: 11px; font-size: 16px; color: #555; }
.tb-apps { margin-left: 7px; display: flex; align-items: center; }
.app { width: 50px; height: 48px; margin-right: 4px; display: flex; align-items: center; justify-content: center; position: relative; border-radius: 5px; }
.app-first { margin-right: 0; }
.app-on { margin-left: 5px; background: #f5efec; box-shadow: 0 0 1px rgba(0,0,0,.2); }
.pre { font-size: 8px; font-weight: 700; fill: #222; }
.app-bar { position: absolute; left: 15px; bottom: 0; width: 20px; height: 4px; border-radius: 2px; background: #0078d4; }
.tray { margin-left: auto; display: flex; align-items: center; padding-right: 25px; font-size: 14.500px; color: #222; }
.eng { margin: 0 24px 0 26px; }
.tray .i20 { margin-right: 10px; }
.clock { display: flex; flex-direction: column; align-items: flex-end; line-height: 21px; margin-left: 10px; margin-right: 9px; margin-top: -2px; }
.tray .tb-bell { margin-right: 0; }
```
